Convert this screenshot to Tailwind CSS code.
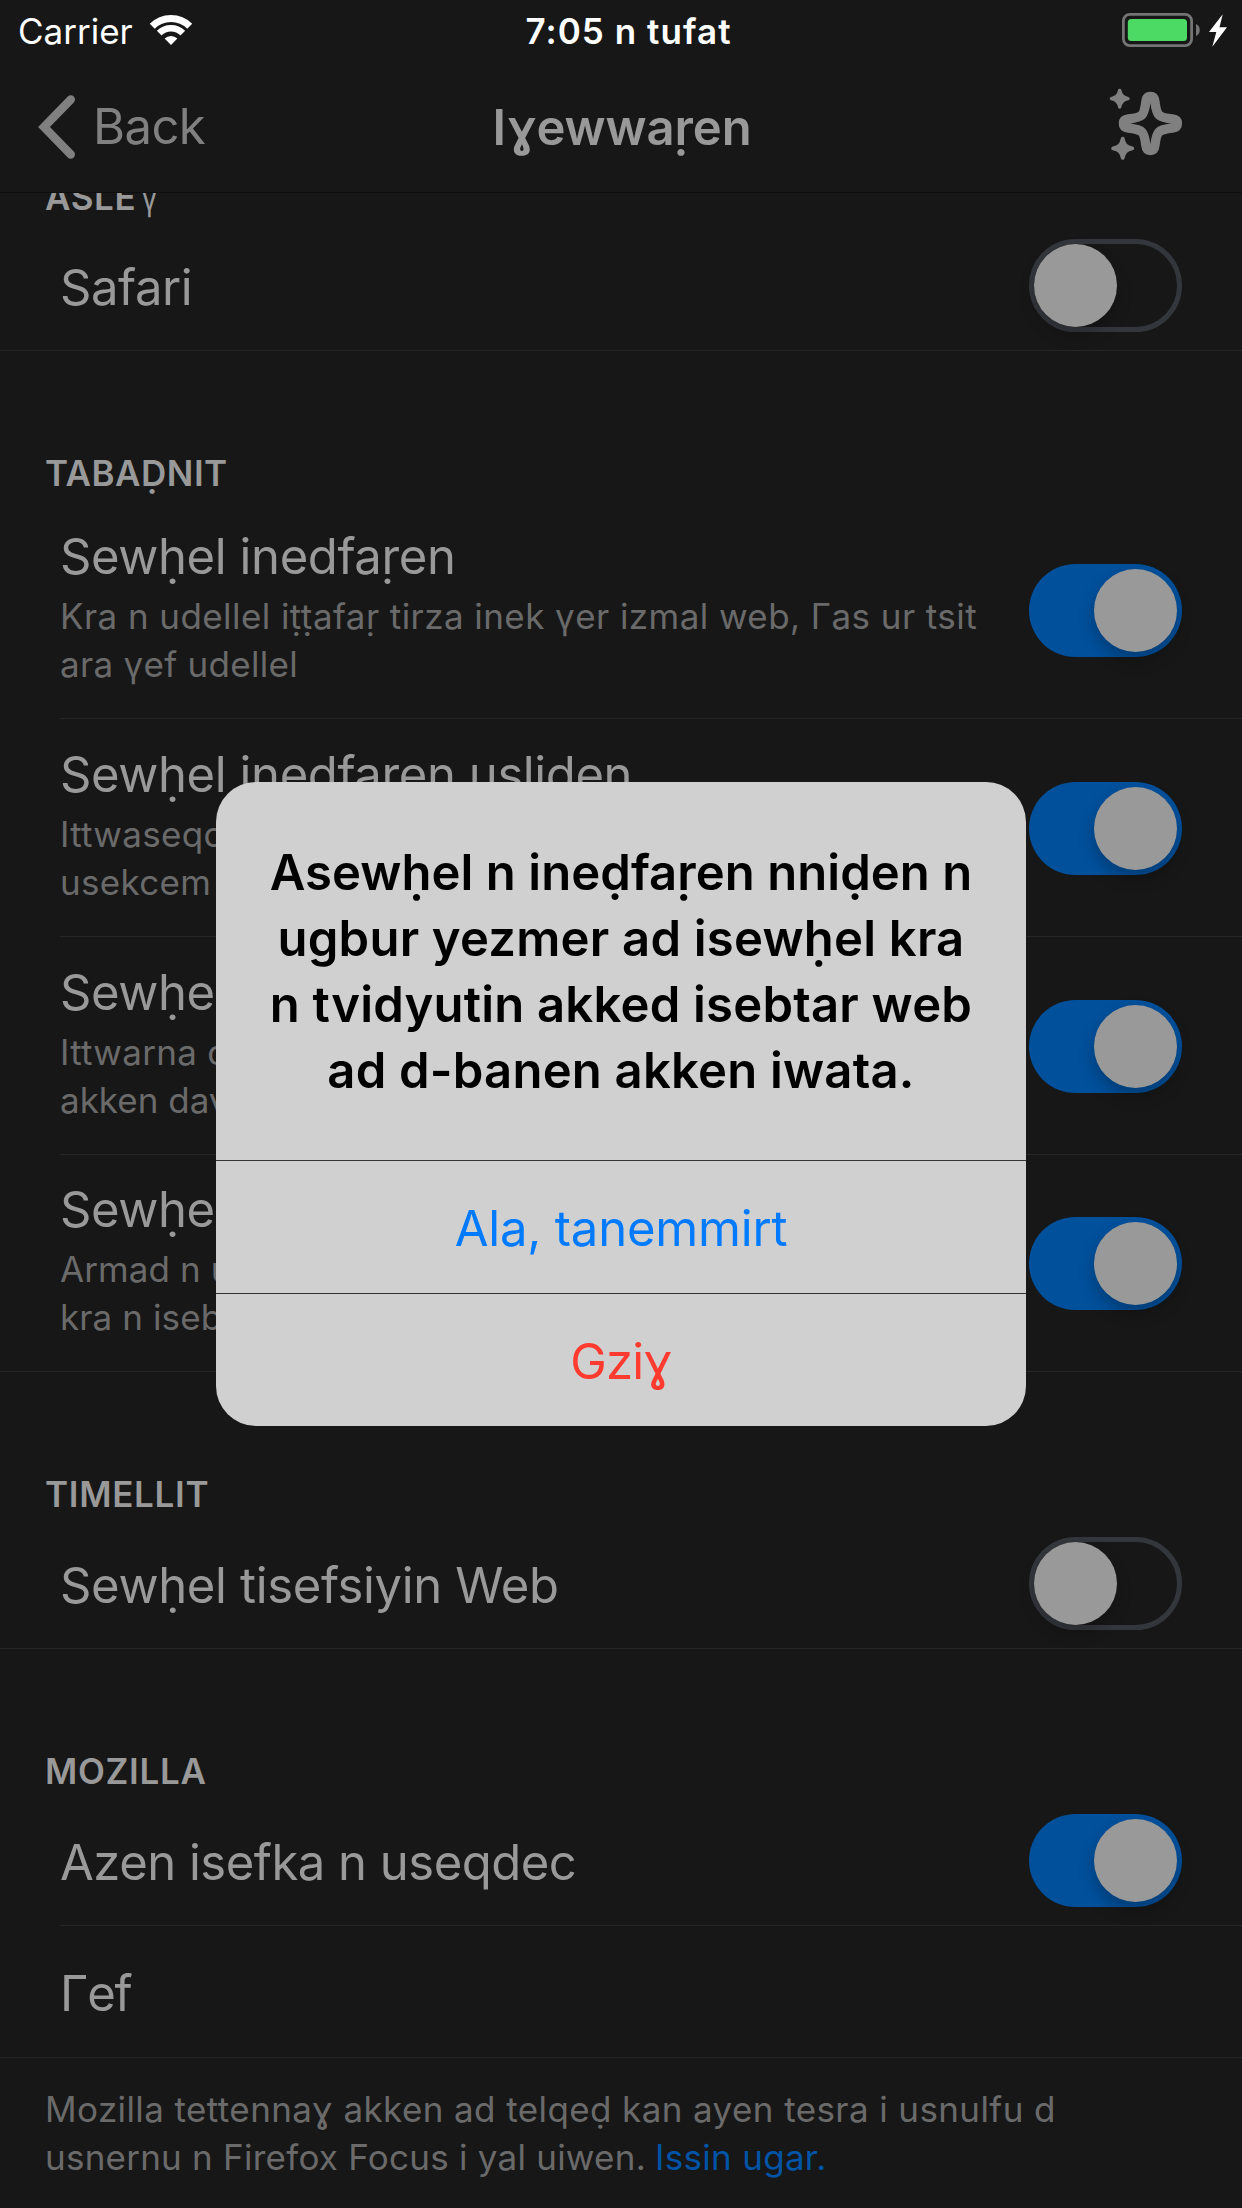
<!DOCTYPE html>
<html lang="kab">
<head>
<meta charset="utf-8">
<title>Iɣewwaṛen</title>
<script src="https://cdn.jsdelivr.net/npm/@tailwindcss/browser@4"></script>
</head>
<body class="bg-[#171717]">
<div class="relative flex h-[2208px] w-[1242px] flex-col overflow-hidden bg-[#171717] font-[Inter,sans-serif] text-[#999]">

  <header class="border-b border-[#0e0e0e]">
    <!-- status bar -->
    <div class="grid h-[62px] grid-cols-[1fr_auto_1fr] items-center text-[35px] leading-[62px] text-white">
      <div class="flex pl-[18px]">
        <span class="w-[130px]">Carrier</span>
        <svg class="h-[62px] w-[46px]" viewBox="148 0 46 62" fill="none" stroke="#fff">
          <path d="M152.26 26.26A26.5 26.5 0 0 1 189.74 26.26" stroke-width="7"/>
          <path d="M159.2 33.2A16.7 16.7 0 0 1 182.8 33.2" stroke-width="6.6"/>
          <path d="M171 45L164.6 38.6A9 9 0 0 1 177.4 38.6Z" fill="#fff" stroke="none"/>
        </svg>
      </div>
      <span class="pl-[15px] font-semibold tracking-[1.05px]">7:05 n tufat</span>
      <svg class="h-[62px] w-[122px] justify-self-end" viewBox="1120 0 122 62">
        <rect x="1123.4" y="14.4" width="68.2" height="31.2" rx="6.5" fill="none" stroke="#747474" stroke-width="2.8"/>
        <rect x="1127.8" y="19" width="59.2" height="22" rx="3.5" fill="#4cd964"/>
        <path d="M1196 24C1201 25.5 1201 34.500 1196 36Z" fill="#747474"/>
        <path d="M1222.7 14.300L1209 32H1216.300L1212.300 46.700L1227 27.300H1219.500Z" fill="#fff"/>
      </svg>
    </div>
    <!-- navigation bar -->
    <div class="grid h-[130px] grid-cols-[1fr_auto_1fr] items-center text-[49px]">
      <div class="flex items-center gap-[13px] pl-9 text-[#808080]">
        <svg class="h-[66px] w-11" viewBox="36 94 44 66" fill="none" stroke="currentColor" stroke-width="8.400" stroke-linecap="round"><path d="M70.800 99.500L44 127L70.800 154.500"/></svg>
        <span class="tracking-[-0.6px]">Back</span>
      </div>
      <h1 class="pt-0.5 pl-0.5 font-semibold tracking-[-0.1px]">Iɣewwaṛen</h1>
      <svg class="mb-[5px] mr-[52px] h-[90px] w-[90px] justify-self-end text-[#808080]" viewBox="0 0 90 90" fill="currentColor" stroke="currentColor">
        <path transform="translate(50.4 43.5)" fill="none" stroke-width="9.400" d="M0-27C2.700-27 4.100-25.500 4.500-22C5.500-14 6.400-10.600 8.500-8.500C10.600-6.400 14-5.500 22-4.500C25.500-4.100 27-2.700 27 0C27 2.700 25.500 4.100 22 4.500C14 5.500 10.600 6.400 8.500 8.500C6.400 10.600 5.500 14 4.500 22C4.100 25.500 2.700 27 0 27C-2.700 27-4.100 25.500-4.500 22C-5.500 14-6.400 10.600-8.500 8.500C-10.600 6.400-14 5.500-22 4.500C-25.500 4.100-27 2.700-27 0C-27-2.700-25.500-4.100-22-4.500C-14-5.500-10.600-6.400-8.500-8.500C-6.400-10.600-5.500-14-4.500-22C-4.100-25.500-2.700-27 0-27Z"/>
        <path transform="translate(19.7 18.7)" stroke-width="3.400" stroke-linejoin="round" d="M0-8.300C1-3.200 3.200-1 8.300 0C3.200 1 1 3.200 0 8.300C-1 3.200-3.200 1-8.300 0C-3.200-1-1-3.200 0-8.300Z"/>
        <path transform="translate(22.7 68.3)" stroke-width="3.800" stroke-linejoin="round" d="M0-9.600C1.100-3.700 3.700-1.100 9.600 0C3.700 1.100 1.100 3.700 0 9.600C-1.100 3.700-3.700 1.100-9.600 0C-3.700-1.100-1.100-3.700 0-9.600Z"/>
      </svg>
    </div>
  </header>

  <main class="flex-1 overflow-hidden">
    <section class="-mt-[21px]">
      <h2 class="h-12 pt-px pl-[45px] text-[35px] leading-[48px] font-semibold tracking-[0.6px]">ASLE<span class="inline-block origin-left scale-x-80 pl-[7px] font-normal">γ</span></h2>
      <div class="flex h-[131px] items-center justify-between border-b border-[#262626] pr-[60px] pl-[60px]">
        <span class="pt-[6px] text-[49px] tracking-[-0.45px]">Safari</span>
        <span class="h-[93px] w-[153px] rounded-full border-[5px] border-[#33363b]"><span class="block size-[83px] rounded-full bg-[#999] shadow-[0_8px_16px_rgba(0,0,0,0.2)]"></span></span>
      </div>
    </section>

    <section class="pt-[98px]">
      <h2 class="mb-1 h-12 pl-[45px] text-[35px] leading-[48px] font-semibold tracking-[0.5px]">TABAḌNIT</h2>

      <div class="ml-[60px] flex h-[218px] justify-between border-b border-[#262626] pt-[25px] pr-[60px]">
        <div class="flex flex-col gap-1.5">
          <h3 class="pt-px -mb-px text-[49px] leading-[60px] tracking-[-0.4px]">Sewḥel inedfaṛen</h3>
          <p class="text-[35px] leading-[48px] tracking-[0.43px] whitespace-nowrap text-[#6a6a6a]">Kra n udellel iṭṭafaṛ tirza inek γer izmal web, Γas ur tsit<br><span class="tracking-[0.3px]">ara γef udellel</span></p>
        </div>
        <span class="mt-[38px] h-[93px] w-[153px] rounded-full bg-[#00509c] p-[5px]"><span class="ml-[60px] block size-[83px] rounded-full bg-[#999] shadow-[0_8px_16px_rgba(0,0,0,0.25)]"></span></span>
      </div>

      <div class="ml-[60px] flex h-[218px] justify-between border-b border-[#262626] pt-[25px] pr-[60px]">
        <div class="flex flex-col gap-1.5">
          <h3 class="pt-px -mb-px text-[49px] leading-[60px] tracking-[-0.4px]">Sewḥel inedfaṛen usliden</h3>
          <p class="text-[35px] leading-[48px] tracking-[0.3px] whitespace-nowrap text-[#6a6a6a]">Ittwaseqd<br>usekcem</p>
        </div>
        <span class="mt-[38px] h-[93px] w-[153px] rounded-full bg-[#00509c] p-[5px]"><span class="ml-[60px] block size-[83px] rounded-full bg-[#999] shadow-[0_8px_16px_rgba(0,0,0,0.25)]"></span></span>
      </div>

      <div class="ml-[60px] flex h-[218px] justify-between border-b border-[#262626] pt-[25px] pr-[60px]">
        <div class="flex flex-col gap-1.5">
          <h3 class="pt-px -mb-px text-[49px] leading-[60px] tracking-[-0.4px]">Sewḥel</h3>
          <p class="text-[35px] leading-[48px] tracking-[0.3px] whitespace-nowrap text-[#6a6a6a]">Ittwarna d<br><span class="tracking-normal">akken dav</span></p>
        </div>
        <span class="mt-[38px] h-[93px] w-[153px] rounded-full bg-[#00509c] p-[5px]"><span class="ml-[60px] block size-[83px] rounded-full bg-[#999] shadow-[0_8px_16px_rgba(0,0,0,0.25)]"></span></span>
      </div>

      <div class="flex h-[217px] justify-between border-b border-[#262626] pt-6 pr-[60px] pl-[60px]">
        <div class="flex flex-col gap-1.5">
          <h3 class="pt-px -mb-px text-[49px] leading-[60px] tracking-[-0.4px]">Sewḥel</h3>
          <p class="text-[35px] leading-[48px] tracking-[0.1px] whitespace-nowrap text-[#6a6a6a]">Armad n u<br>kra n iseb</p>
        </div>
        <span class="mt-[38px] h-[93px] w-[153px] rounded-full bg-[#00509c] p-[5px]"><span class="ml-[60px] block size-[83px] rounded-full bg-[#999] shadow-[0_8px_16px_rgba(0,0,0,0.25)]"></span></span>
      </div>
    </section>

    <section class="pt-[98px]">
      <h2 class="h-12 pl-[45px] text-[35px] leading-[48px] font-semibold tracking-[0.7px]">TIMELLIT</h2>
      <div class="flex h-[131px] items-center justify-between border-b border-[#262626] pr-[60px] pl-[60px]">
        <span class="pt-[6px] text-[49px] tracking-[-0.35px]">Sewḥel tisefsiyin Web</span>
        <span class="h-[93px] w-[153px] rounded-full border-[5px] border-[#33363b]"><span class="block size-[83px] rounded-full bg-[#999] shadow-[0_8px_16px_rgba(0,0,0,0.2)]"></span></span>
      </div>
    </section>

    <section class="pt-[98px]">
      <h2 class="h-12 pl-[45px] text-[35px] leading-[48px] font-semibold tracking-[0.7px]">MOZILLA</h2>
      <div class="ml-[60px] flex h-[131px] items-center justify-between border-b border-[#262626] pr-[60px]">
        <span class="pt-[6px] text-[49px] tracking-[-0.5px]">Azen isefka n useqdec</span>
        <span class="h-[93px] w-[153px] rounded-full bg-[#00509c] p-[5px]"><span class="ml-[60px] block size-[83px] rounded-full bg-[#999] shadow-[0_8px_16px_rgba(0,0,0,0.25)]"></span></span>
      </div>
      <div class="flex h-[132px] items-center border-b border-[#262626] pl-[60px]">
        <span class="pt-[5px] text-[49px] tracking-[-1.2px]">Γef</span>
      </div>
      <p class="pt-[27px] pl-[45px] text-[35px] leading-[48px] tracking-[0.4px] whitespace-nowrap text-[#6a6a6a]">Mozilla tettennaɣ akken ad telqeḍ kan ayen tesra i usnulfu d<br><span class="tracking-[0.24px]">usnernu n Firefox Focus i yal uiwen.</span><a class="ml-[9px] tracking-[0.3px] text-[#0054a6]">Issin ugar.</a></p>
    </section>
  </main>

  <!-- alert over the dimmed settings -->
  <div class="absolute top-[782px] left-[216px] flex h-[644px] w-[810px] flex-col overflow-hidden rounded-[40px] bg-[#d0d0d0] text-center text-[49px]">
    <p class="h-[378px] pt-[58px] leading-[66px] font-semibold tracking-[0.22px] whitespace-nowrap text-black"><span class="tracking-[0.06px]">Asewḥel n ineḍfaṛen nniḍen n</span><br>ugbur yezmer ad isewḥel kra<br>n tvidyutin akked isebtar web<br>ad d-banen akken iwata.</p>
    <button class="h-[133px] border-t border-[#333] pt-[3px] tracking-[-0.2px] text-[#007aff]">Ala, tanemmirt</button>
    <button class="h-[133px] border-t border-[#333] pt-[3px] tracking-[-0.8px] text-[#ff3b30]">Gziɣ</button>
  </div>
</div>
</body>
</html>
